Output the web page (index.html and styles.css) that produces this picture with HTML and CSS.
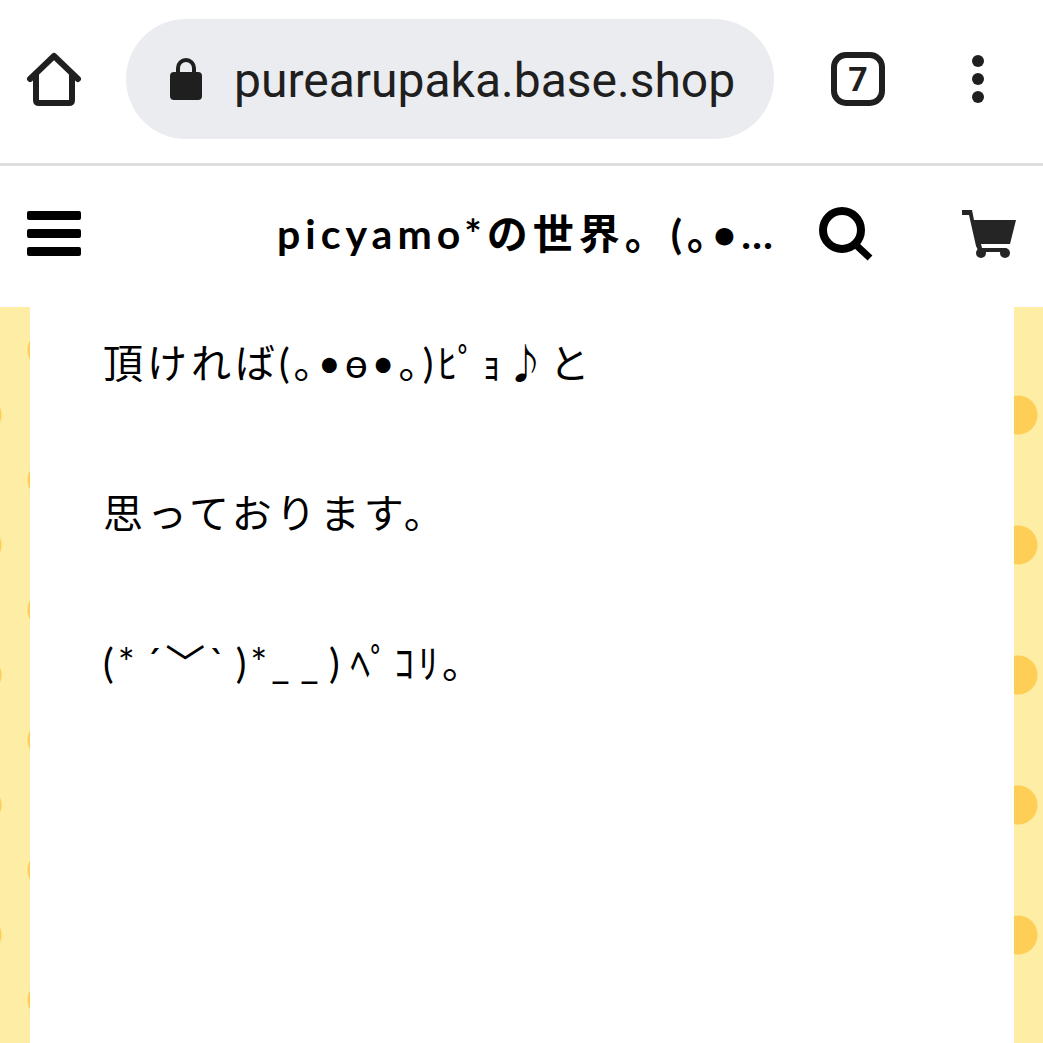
FILE: index.html
```
<!DOCTYPE html>
<html lang="ja">
<head>
    <meta charset="UTF-8">
    <meta name="viewport" content="width=device-width, initial-scale=1.0">
    <title>picyamo*の世界。</title>
    <link rel="stylesheet" href="styles.css">
</head>
<body>

<div class="browser-bar">
    <button class="icon-btn" aria-label="Home">
        <svg width="54" height="54" viewBox="0 0 54 54">
            <path d="M3 27 L27 4 L51 27" fill="none" stroke="#1f1f1f" stroke-width="6" stroke-linecap="round" stroke-linejoin="round"/>
            <path d="M9 21 V48 Q9 51 12 51 H42 Q45 51 45 48 V21" fill="none" stroke="#1f1f1f" stroke-width="6"/>
        </svg>
    </button>
    <div class="address">
        <svg class="lock" width="32" height="44" viewBox="0 0 32 44">
            <rect y="15" width="32" height="28" rx="4" fill="#1f1f1f"/>
            <path d="M8 17 V11 a8 8 0 0 1 16 0 V17" fill="none" stroke="#1f1f1f" stroke-width="4"/>
        </svg>
        <input class="url" type="text" value="purearupaka.base.shop" aria-label="Address">
    </div>
    <button class="tabs-btn" aria-label="Tabs">7</button>
    <button class="icon-btn more-btn" aria-label="More">
        <svg width="12" height="48" viewBox="0 0 12 48">
            <circle cx="6" cy="6" r="6" fill="#1f1f1f"/>
            <circle cx="6" cy="24" r="6" fill="#1f1f1f"/>
            <circle cx="6" cy="42" r="6" fill="#1f1f1f"/>
        </svg>
    </button>
</div>

<header class="shop-header">
    <button class="icon-btn" aria-label="Menu">
        <svg width="54" height="46" viewBox="0 0 54 46">
            <rect y="0" width="54" height="9" rx="2"/>
            <rect y="18" width="54" height="9" rx="2"/>
            <rect y="36" width="54" height="9" rx="2"/>
        </svg>
    </button>
    <h1 class="shop-title">picyamo*の世界。(｡•…</h1>
    <button class="icon-btn" aria-label="Search">
        <svg width="54" height="54" viewBox="0 0 54 54">
            <circle cx="23" cy="23" r="19" fill="none" stroke="#000" stroke-width="8"/>
            <path d="M36 37 L51 51" stroke="#000" stroke-width="7"/>
        </svg>
    </button>
    <a class="cart" href="#" aria-label="Cart">
        <svg width="54" height="48" viewBox="0 0 54 48" fill="#252525">
            <path d="M0 0 H10 L12 10 H54 L48 34 H19 L20 38 H44 V42 H17 L14 36 L7 5 H0 Z"/>
            <circle cx="19" cy="43" r="5"/>
            <circle cx="43" cy="43" r="5"/>
        </svg>
    </a>
</header>

<main class="page">
    <div class="content">
        <p>頂ければ(｡•ɵ•｡)ﾋﾟｮ♪と</p>
        <p>思っております。</p>
        <p>(*&hairsp;´﹀`&hairsp;)*_&hairsp;_&hairsp;)&hairsp;ﾍﾟｺﾘ｡</p>
    </div>
</main>

</body>
</html>
```
FILE: styles.css
```
* {
    box-sizing: border-box;
}
body {
    margin: 0;
    min-height: 100vh;
    display: flex;
    flex-direction: column;
    background: #fff;
    color: #000;
    font-family: Lato, "Noto Sans CJK JP", sans-serif;
}
button {
    padding: 0;
    border: none;
    background: none;
    cursor: pointer;
}
svg {
    display: block;
}
.icon-btn {
    flex: none;
}

/* browser bar */
.browser-bar {
    display: flex;
    align-items: center;
    padding: 19px 59px 24px 27px;
    border-bottom: 3px solid #dedede;
}
.address {
    flex: 1;
    min-width: 0;
    height: 120px;
    margin: 0 57px 0 45px;
    padding: 0 36px 0 44px;
    display: flex;
    align-items: center;
    gap: 32px;
    background: #ebecef;
    border-radius: 60px;
}
.lock {
    flex: none;
}
.url {
    flex: 1;
    min-width: 0;
    padding: 2px 0 0;
    border: none;
    outline: none;
    background: none;
    color: #1f1f1f;
    font-family: Roboto, sans-serif;
    font-size: 48px;
}
.tabs-btn {
    flex: none;
    width: 54px;
    height: 54px;
    border: 6px solid #1f1f1f;
    border-radius: 15px;
    color: #1f1f1f;
    font-family: Roboto, sans-serif;
    font-size: 34px;
    font-weight: bold;
    line-height: 42px;
}
.more-btn {
    margin-left: 87px;
}

/* shop header */
.shop-header {
    display: flex;
    align-items: center;
    height: 141px;
    padding: 0 27px 5px;
}
.shop-title {
    flex: 1;
    min-width: 0;
    margin: 0 40px 0 196px;
    overflow: hidden;
    white-space: nowrap;
    text-overflow: ellipsis;
    font-size: 41px;
    line-height: 60px;
    font-weight: bold;
    letter-spacing: 5px;
}
.cart {
    flex: none;
    margin-left: 89px;
}

/* dotted wallpaper shows on both sides of the content */
.page {
    flex: 1;
    display: flex;
    padding: 0 29px 0 30px;
    background-color: #feeda5;
    background-image:
        radial-gradient(circle at 0 65px, #ffce57 19px, transparent 20px),
        radial-gradient(circle at 65px 65px, #ffce57 19px, transparent 20px),
        radial-gradient(circle at 65px 65px, #ffce57 19px, transparent 20px);
    background-size: 130px 130px;
    background-repeat: repeat-y;
    background-position: left -18px top 43px, left -18px top 108px, right -40px top 43px;
}
.content {
    flex: 1;
    padding: 19px 73px;
    background: #fff;
}
.content p {
    margin: 0 0 75px;
    font-size: 40px;
    line-height: 75px;
    letter-spacing: 4px;
}
```
